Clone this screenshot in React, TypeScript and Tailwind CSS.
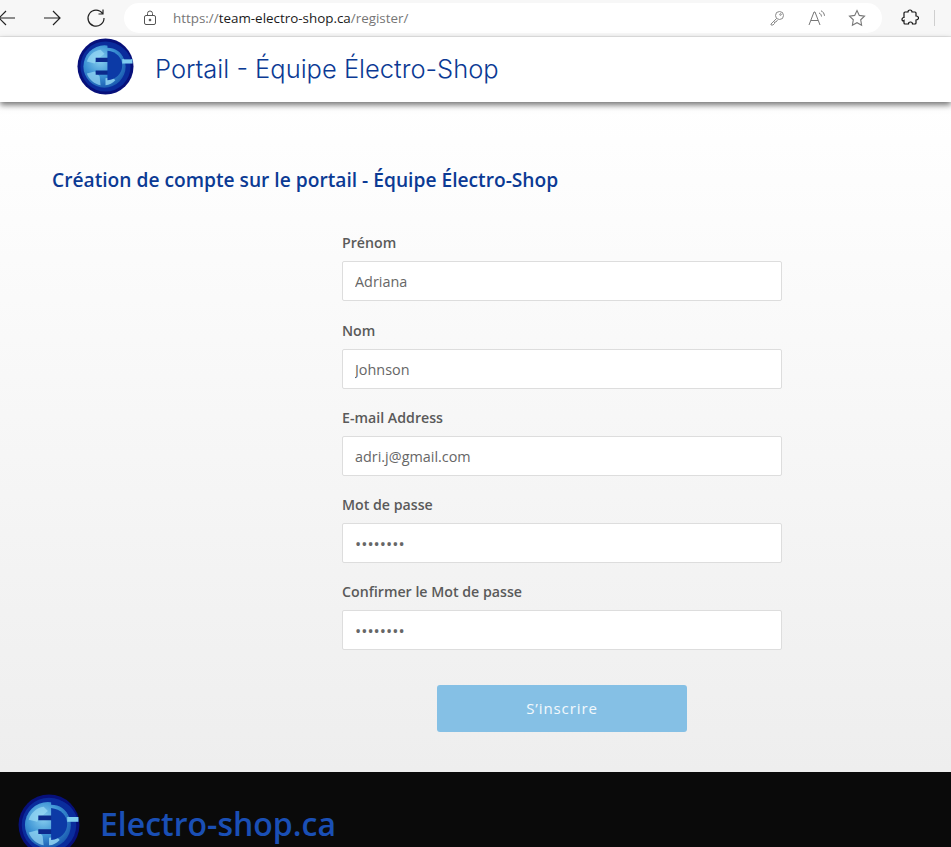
import { FC } from "react";

const fields = [
  { label: "Prénom", type: "text", value: "Adriana" },
  { label: "Nom", type: "text", value: "Johnson" },
  { label: "E-mail Address", type: "text", value: "adri.j@gmail.com" },
  { label: "Mot de passe", type: "password", value: "password" },
  { label: "Confirmer le Mot de passe", type: "password", value: "password" },
];

// globe + plug logo, used in the header and the footer
const Logo: FC<{ className: string; id: string }> = ({ className, id }) => (
  <svg viewBox="0 0 58 58" className={className}>
    <defs>
      <radialGradient id={id} cx="0.4" cy="0.35" r="0.75">
        <stop offset="0" stopColor="#8ad0f0" />
        <stop offset="0.5" stopColor="#3c93d4" />
        <stop offset="1" stopColor="#124da8" />
      </radialGradient>
    </defs>
    <circle cx="29" cy="29" r="28.500" fill="#07107a" />
    <circle cx="29" cy="29" r="25.500" fill="#0a2c9c" />
    <circle cx="28" cy="29" r="21.500" fill={`url(#${id})`} />
    <path d="M10 24c2-6 7-11 14-12l4 4-5 4-3 1-2 5-4-1zM10 36l8-2 5 5 1 9c-6-1-12-6-14-12z" fill="#9adcf5" opacity="0.7" />
    <path d="M29 41l7-1 3 3c-3 3-6 5-10 5z" fill="#9adcf5" opacity="0.8" />
    <path d="M19 20h14v4.500H19zM19 33h14v4.500H19z" fill="#0b2a8c" />
    <path d="M31 13c9 1 15 7 15 15s-6 14-15 15z" fill="#0c3aa6" />
    <path d="M46 21.500h10.500v4.500H46z" fill="#7fcdf0" />
    <path d="M31 5c11 0 20 6 24 16.500h-7C45 14 39 10 31 10z" fill="#0a2c9c" />
  </svg>
);

const BrowserBar: FC = () => (
  <div className="h-[37px] bg-[#f7f7f7] border-b border-[#e8e8e8] flex items-center overflow-hidden shrink-0">
    <svg viewBox="0 0 20 20" className="w-5 h-5 ml-[-3px] shrink-0 text-[#222]" fill="none" stroke="currentColor" strokeWidth="1.2">
      <path d="M18 10H2M9 3l-7 7 7 7" />
    </svg>
    <svg viewBox="0 0 20 20" className="w-5 h-5 ml-[25px] shrink-0 text-[#222]" fill="none" stroke="currentColor" strokeWidth="1.2">
      <path d="M2 10h16M11 3l7 7-7 7" />
    </svg>
    <svg viewBox="0 0 20 20" className="w-5 h-5 ml-[24px] shrink-0 text-[#222]" fill="none" stroke="currentColor" strokeWidth="1.2">
      <path d="M16.500 5.500A8 8 0 1 0 18 10M17 1.500v4.500h-4.500" />
    </svg>
    <div className="ml-[18px] w-[758px] h-[30px] shrink-0 bg-white rounded-full flex items-center pl-[19px] pr-[16px]">
      <svg viewBox="0 0 14 16" className="w-[14px] h-4 text-[#555]" fill="none" stroke="currentColor" strokeWidth="1">
        <rect x="1.500" y="5.500" width="11" height="9" rx="1.500" />
        <path d="M4.500 5.500V3.500a2.500 2.500 0 0 1 5 0v2" />
        <circle cx="7" cy="10" r="0.9" fill="currentColor" />
      </svg>
      <div className="ml-[16px] text-[13.400px] text-[#767676] font-['Open_Sans',sans-serif] whitespace-nowrap">
        https://<span className="text-[#1a1a1a]">team-electro-shop.ca</span>/register/
      </div>
      <svg viewBox="0 0 16 16" className="w-4 h-4 ml-auto text-[#8a8a8a]" fill="none" stroke="currentColor" strokeWidth="1">
        <circle cx="10.500" cy="5.500" r="4" />
        <path d="M7.500 8.500 2 14v1h2l1.500-1.500V12H7l1.500-2" />
        <circle cx="11.500" cy="4.500" r="0.8" />
      </svg>
      <svg viewBox="0 0 18 16" className="w-[18px] h-4 ml-[23px] text-[#777]" fill="none" stroke="currentColor" strokeWidth="1">
        <path d="M1 15 6 2h1l5 13M3 10.500h7M11 3c1.500.5 2.200 1.500 2.500 3.500M13 .8c2 .8 3.200 2.500 3.500 5" />
      </svg>
      <svg viewBox="0 0 18 18" className="w-[18px] h-[18px] ml-[22px] text-[#777]" fill="none" stroke="currentColor" strokeWidth="1.1">
        <path d="m9 1.500 2.300 4.900 5.200.7-3.800 3.700.9 5.400L9 13.700l-4.600 2.500.9-5.400-3.800-3.700 5.200-.7z" />
      </svg>
    </div>
    <svg viewBox="0 0 18 18" className="w-[18px] h-[18px] ml-[19px] shrink-0 text-[#111]" fill="none" stroke="currentColor" strokeWidth="1.2">
      <path d="M7 3c0-1.500 1-2 2-2s2 .7 2 2h3c.6 0 1 .4 1 1v3c1.500 0 2.500.8 2.500 2s-1 2-2.500 2v3c0 .6-.4 1-1 1h-2.500c0-1.300-.8-2-2-2s-2 .7-2 2H4c-.6 0-1-.4-1-1v-2.500C1.700 12.500 1 11.500 1 10.500S1.700 8.500 3 8.500V4c0-.6.4-1 1-1z" />
    </svg>
    <div className="ml-[15px] w-px h-4 shrink-0 bg-[#cfcfcf]" />
  </div>
);

export default function App() {
  return (
    <div className="h-[847px] overflow-hidden flex flex-col bg-white">
      <BrowserBar />

      <header className="relative z-10 h-[65px] bg-white shadow-[0_3px_6px_rgba(0,0,0,0.55)] flex items-center pl-[77px] shrink-0">
        <Logo id="logo-top" className="w-[57px] h-[57px] mt-[-6px]" />
        <h1 className="ml-[21px] text-[25.500px] font-[350] text-[#0b3a94] font-['Inter',sans-serif] whitespace-nowrap">
          Portail - Équipe Électro-Shop
        </h1>
      </header>

      <main className="h-[670px] bg-linear-to-b from-white to-[#eeeeee] font-['Open_Sans',sans-serif] shrink-0">
        <h2 className="ml-[52px] mt-[64px] text-[19.200px] leading-[28px] font-semibold text-[#0b3a94] whitespace-nowrap">
          Création de compte sur le portail - Équipe Électro-Shop
        </h2>
        <form className="ml-[342px] w-[440px] mt-[39.400px] flex flex-col gap-[19.250px]">
          {fields.map((field) => (
            <div key={field.label}>
              <label className="block h-[20px] text-[14.200px] leading-[20px] font-[560] text-[#5a5a5a]">
                {field.label}
              </label>
              <input
                readOnly
                type={field.type}
                defaultValue={field.value}
                className={
                  field.type === "password"
                    ? "block mt-[8px] w-full h-[40px] px-3 bg-white border border-[#dddddd] rounded-[2px] text-[16.500px] text-[#666666] outline-none"
                    : "block mt-[8px] w-full h-[40px] px-3 pt-[1px] bg-white border border-[#dddddd] rounded-[2px] text-[14.400px] text-[#666666] outline-none"
                }
              />
            </div>
          ))}
          <button
            type="button"
            className="self-center mt-[15.100px] w-[250px] h-[47px] rounded-[3px] bg-[#85c0e5] text-white/90 text-[15px] font-medium tracking-[0.06em]"
          >
            S’inscrire
          </button>
        </form>
      </main>

      <footer className="flex-1 bg-[#0a0a0a] flex items-start pl-[18px] pt-[22px] font-['Open_Sans',sans-serif]">
        <Logo id="logo-bottom" className="w-[62px] h-[62px] shrink-0" />
        <div className="ml-[20px] mt-[8px] text-[32px] leading-[44px] font-semibold text-[#1a4fb5] whitespace-nowrap">
          Electro-shop.ca
        </div>
      </footer>
    </div>
  );
}
